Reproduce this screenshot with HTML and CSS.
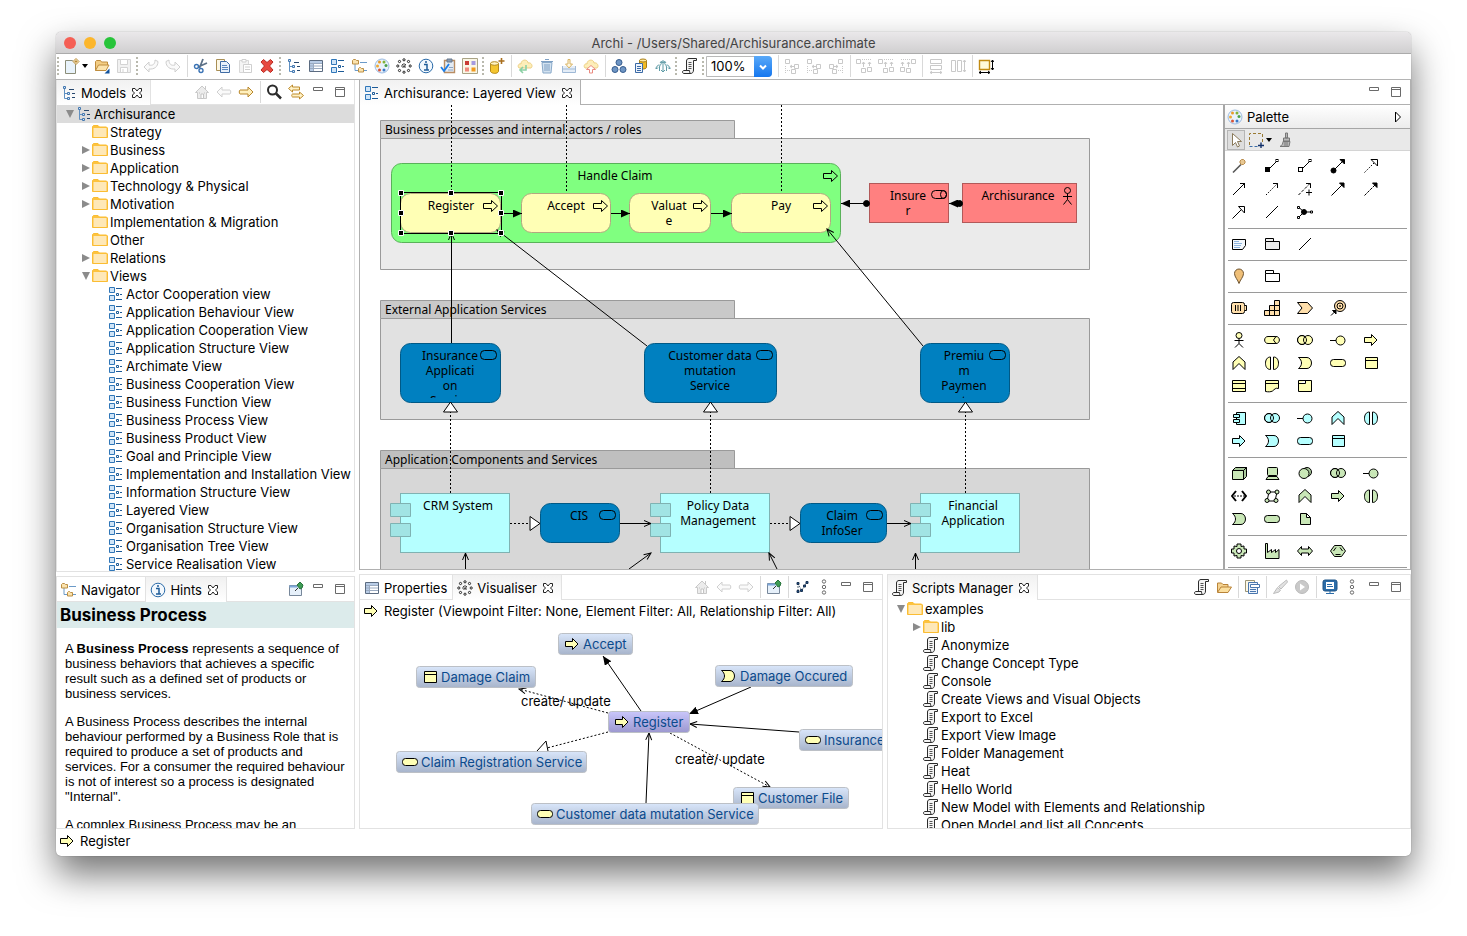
FILE: index.html
```html
<!DOCTYPE html>
<html lang="en">

<head>
    <meta charset="UTF-8">
    <meta name="viewport" content="width=device-width, initial-scale=1.0">
    <title>Archi - /Users/Shared/Archisurance.archimate</title>
    <link rel="stylesheet" href="styles.css">
</head>

<body>
    <!-- icon sprite -->
    <svg class="sprite" aria-hidden="true">
        <defs>
            <linearGradient id="box-blue" x1="0" y1="0" x2="0" y2="1">
                <stop offset="0" stop-color="#d9e6fa" />
                <stop offset="1" stop-color="#a7b4cb" />
            </linearGradient>
            <linearGradient id="box-purple" x1="0" y1="0" x2="0" y2="1">
                <stop offset="0" stop-color="#c9c6fb" />
                <stop offset="1" stop-color="#9c98cf" />
            </linearGradient>
            <marker id="m-fill" viewBox="0 0 9 8" refX="9" refY="4" markerWidth="9" markerHeight="8" orient="auto" markerUnits="userSpaceOnUse">
                <path d="M0 0L9 4L0 8z" fill="#000" stroke="none" />
            </marker>
            <marker id="m-open" viewBox="0 0 9 8" refX="8" refY="4" markerWidth="9" markerHeight="8" orient="auto" markerUnits="userSpaceOnUse">
                <path d="M1 1L8 4L1 7" fill="none" stroke="#000" />
            </marker>
            <marker id="m-tri" viewBox="0 0 12 16" refX="11" refY="8" markerWidth="12" markerHeight="16" orient="auto" markerUnits="userSpaceOnUse">
                <path d="M1 1L11 8L1 15z" fill="#fff" stroke="#000" />
            </marker>
        </defs>

        <!-- archimate elements -->
        <symbol id="i-process" viewBox="0 0 16 16"><path d="M1.5 5.5h7v-3L14 8l-5.500 5.500v-3h-7z" /></symbol>
        <symbol id="i-mark" viewBox="0 0 16 16"><path d="M.500 5.500h8v-3L14.500 8l-6 5.500v-3h-8z" /></symbol>
        <symbol id="i-function" viewBox="0 0 16 16"><path d="M2 14.500V7l6-5.500L14 7v7.500l-6-6z" /></symbol>
        <symbol id="i-interaction" viewBox="0 0 16 16"><path d="M6.500 2v12.500c-3.500 0-5-3-5-6.200S3 2 6.500 2zM9.500 2c3.500 0 5 3 5 6.200s-1.500 6.300-5 6.300z" /></symbol>
        <symbol id="i-event" viewBox="0 0 16 16"><path d="M1.500 2.500H10c2.500 0 4.500 2.500 4.500 5.500s-2 5.500-4.500 5.500H1.500c2-1.500 3-3.500 3-5.500s-1-4-3-5.500z" /></symbol>
        <symbol id="i-service" viewBox="0 0 16 16"><rect x=".5" y="4.500" width="15" height="7" rx="3" /></symbol>
        <symbol id="i-object" viewBox="0 0 16 16"><path d="M2.500 2.500h12v11h-12zM2.500 5.500h12" /></symbol>
        <symbol id="i-contract" viewBox="0 0 16 16"><path d="M1.500 2.500h13v11h-13zM1.500 5.500h13M1.500 10.500h13" /></symbol>
        <symbol id="i-representation" viewBox="0 0 16 16"><path d="M1.500 2.500h13v8c-3-1-4 1-6 2.500-2 1-4 1-7 .5zM1.500 5.500h13" /></symbol>
        <symbol id="i-product" viewBox="0 0 16 16"><path d="M1.500 2.500h13v11h-13zM1.500 5.500h7v-3" /></symbol>
        <symbol id="i-actor" viewBox="0 0 16 16"><circle cx="8" cy="3.500" r="3" /><path d="M8 6.500v5M3.500 8.500h9M8 11.500l-4 4M8 11.500l4 4" /></symbol>
        <symbol id="i-role" viewBox="0 0 16 16"><path d="M4 4.500h8c4.500 0 4.500 7 0 7H4c-4.500 0-4.500-7 0-7z" /><path d="M12 4.500L9.500 8l2.500 3.500" /></symbol>
        <symbol id="i-collab" viewBox="0 0 16 16"><circle cx="5" cy="8" r="4.500" /><circle cx="11" cy="8" r="4.500" /><circle cx="5" cy="8" r="4.500" fill="none" /></symbol>
        <symbol id="i-interface" viewBox="0 0 16 16"><path d="M0 8.500h6" /><circle cx="10.500" cy="8.500" r="4.500" /></symbol>
        <symbol id="i-component" viewBox="0 0 16 16"><path d="M5.500 2.500h9v12h-9z" /><path d="M2.500 4.500h6v3h-6zM2.500 9.500h6v3h-6z" /></symbol>
        <symbol id="i-node" viewBox="0 0 16 16"><path d="M1.500 5.500l3-3h11l-3 3z" fill="#a9c99c" /><path d="M12.500 5.500l3-3v9l-3 3z" fill="#a9c99c" /><path d="M1.500 5.500h11v9h-11z" /></symbol>
        <symbol id="i-device" viewBox="0 0 16 16"><rect x="3.500" y="2.500" width="10" height="8" rx="1" /><path d="M4 11.500h9l2 3H2z" /></symbol>
        <symbol id="i-software" viewBox="0 0 16 16"><circle cx="10" cy="7" r="4.500" fill="#a9c99c" /><circle cx="7" cy="8.500" r="5" /></symbol>
        <symbol id="i-path" viewBox="0 0 16 16"><path d="M5 3L1 8l4 5M11 3l4 5-4 5" stroke-width="2" fill="none" /><path d="M3 8h11" stroke-dasharray="2 1" /></symbol>
        <symbol id="i-network" viewBox="0 0 16 16"><path d="M5 4h8l-2 9H3z" fill="none" /><circle cx="4.500" cy="4" r="2" /><circle cx="13" cy="4" r="2" /><circle cx="3" cy="12.500" r="2" /><circle cx="12" cy="12.500" r="2" /></symbol>
        <symbol id="i-artifact" viewBox="0 0 16 16"><path d="M3.500 2.500h6l4 4v7h-10zM9.500 2.500v4h4" /></symbol>
        <symbol id="i-equipment" viewBox="0 0 16 16"><path d="M6 1h4v2.500l3-.5v3h2.500v4H13v3l-3-.5V15H6v-2.500L3 13v-3H.5V6H3V3l3 .5z" /><circle cx="8" cy="8" r="2.500" fill="#fff" /></symbol>
        <symbol id="i-facility" viewBox="0 0 16 16"><path d="M1.500.500h2v9l4-3v3l4-3v3l3.500-3v9H1.500z" /></symbol>
        <symbol id="i-distribution" viewBox="0 0 16 16"><path d="M4.500 3.500L.5 8l4 4.500V10h7v2.500l4-4.500-4-4.500V6h-7z" /></symbol>
        <symbol id="i-material" viewBox="0 0 16 16"><path d="M4.500 2.500h7L15.500 8l-4 5.500h-7L.5 8z" /><path d="M6 4.500L3.500 8M10 4.500L12.500 8M5.500 11.500h5" /></symbol>
        <symbol id="i-resource" viewBox="0 0 16 16"><rect x=".5" y="2.500" width="13" height="11" rx="2" /><path d="M13.500 5.500h2v5h-2M4.500 5v6M7 5v6M9.500 5v6" /></symbol>
        <symbol id="i-capability" viewBox="0 0 16 16"><path d="M.5 10.500h15v5H.5zM5.500 5.500h10v5h-10zM10.500.500h5v5h-5zM5.500 10.500v5M10.500 5.500v10" /></symbol>
        <symbol id="i-valuestream" viewBox="0 0 16 16"><path d="M.5 2.500h10L15.500 8l-5 5.500H.5L5 8z" /></symbol>
        <symbol id="i-course" viewBox="0 0 16 16"><circle cx="10" cy="6" r="5.500" /><circle cx="10" cy="6" r="3" /><circle cx="10" cy="6" r=".5" /><path d="M1 15.500l4-4M2.500 10.500h3.500v3.500z" fill="#000" /></symbol>
        <symbol id="i-location" viewBox="0 0 16 16"><path d="M8 15.500C7 12 3.500 9 3.500 5.500a4.500 4.500 0 0 1 9 0C12.500 9 9 12 8 15.500z" stroke="#6d5330" /></symbol>
        <symbol id="i-note" viewBox="0 0 16 16"><path d="M1.500 3.500h13v6l-3 4h-10z" fill="#f3f8fd" /><path d="M3 5.500h5M3 7.500h8M3 9.500h7M3 11.500h6" stroke="#8db4de" /></symbol>
        <symbol id="i-group" viewBox="0 0 16 16"><path d="M1.500 5.500h14v8h-14zM1.500 5.500v-3h8v3" /></symbol>

        <!-- relations -->
        <symbol id="r-magic" viewBox="0 0 16 16"><path d="M2 14.500L10 6.500" stroke="#555" stroke-width="1.600" /><path d="M9 3l1.500-1.500h2L14 3v2l-1.500 1.500h-2L9 5z" fill="#e8c893" stroke="#b98c4c" /></symbol>
        <symbol id="r-composition" viewBox="0 0 16 16"><path d="M4 12L13 3" /><rect x="1.500" y="9.500" width="4" height="4" fill="#000" /><rect x="12" y="1.500" width="2" height="2" fill="#fff" /></symbol>
        <symbol id="r-aggregation" viewBox="0 0 16 16"><path d="M4 12L13 3" /><rect x="1.500" y="9.500" width="4" height="4" fill="#fff" /><rect x="12" y="1.500" width="2" height="2" fill="#fff" /></symbol>
        <symbol id="r-assignment" viewBox="0 0 16 16"><path d="M3 13L13 3" /><circle cx="3.500" cy="12.500" r="2.500" fill="#000" /><path d="M10 1.500h4.500V6z" fill="#000" /></symbol>
        <symbol id="r-realization" viewBox="0 0 16 16"><path d="M1.500 14.500L11 5" stroke-dasharray="1.500 1.500" /><path d="M8 1.500h6.500V8z" fill="#fff" /></symbol>
        <symbol id="r-serving" viewBox="0 0 16 16"><path d="M2 14L14 2M9 2.500h4.500V7" fill="none" /></symbol>
        <symbol id="r-access" viewBox="0 0 16 16"><path d="M2 14L14 2" stroke-dasharray="1.500 1.500" /><path d="M9 2.500h4.500V7" fill="none" /></symbol>
        <symbol id="r-influence" viewBox="0 0 16 16"><path d="M1.500 14L14 1.500" stroke-dasharray="3 1.500" /><path d="M9 2.500h4.500V7M9 11.500h6M12 8.500v6" fill="none" /></symbol>
        <symbol id="r-trigger" viewBox="0 0 16 16"><path d="M1.500 14.500L12 4" /><path d="M9.500 2h4.500v4.500z" fill="#000" /></symbol>
        <symbol id="r-flow" viewBox="0 0 16 16"><path d="M1.500 14.500L12 4" stroke-dasharray="3 1" /><path d="M9.500 2h4.500v4.500z" fill="#000" /></symbol>
        <symbol id="r-special" viewBox="0 0 16 16"><path d="M1.500 14.500L11 5" /><path d="M7.500 2.500h6V9z" fill="#fff" /></symbol>
        <symbol id="r-line" viewBox="0 0 16 16"><path d="M2 14L14 2" /></symbol>
        <symbol id="r-junction" viewBox="0 0 16 16"><path d="M2 3.500l5 4.500-5 5M7 8h7" fill="none" /><circle cx="7" cy="8" r="2.500" fill="#000" /><path d="M.500 2.500h2v2h-2zM.500 12.500h2v2h-2zM13.500 7h2v2h-2z" fill="#fff" /></symbol>

        <!-- workbench -->
        <symbol id="w-min" viewBox="0 0 16 16"><path d="M3.500 3.500h9v3h-9z" fill="#fff" stroke="#6a6a6a" /></symbol>
        <symbol id="w-max" viewBox="0 0 16 16"><path d="M3.500 3.500h9v9h-9zM3.500 5.500h9" fill="#fff" stroke="#6a6a6a" /></symbol>
        <symbol id="w-close" viewBox="0 0 12 12"><path d="M1.500 1.500h2.500L6 4l2-2.500h2.500V4L8.500 6l2 2v2.500H8L6 8l-2 2.500H1.500V8l2-2-2-2z" fill="#fff" stroke="#222" /></symbol>
        <symbol id="w-model" viewBox="0 0 16 16"><path d="M3.500 4v9.500H7M3.500 8.500H7" fill="none" stroke="#5f8fc1" /><path d="M2.500 1.500h2v2h-2zM6.500 7.500h2v2h-2zM6.500 12.500h2v2h-2z" fill="#d8e8f7" stroke="#4478b0" /><path d="M8 4.500h5M11 8.500h3M11 12.500h3" stroke="#27486e" fill="none" /></symbol>
        <symbol id="w-view" viewBox="0 0 16 16"><path d="M1.500 1.500h5v5h-5zM1.500 9.500h5v5h-5z" fill="#cfe4f7" stroke="#2f76b8" /><path d="M8 2.500h6M8 13.500h6M12 8.500h2" stroke="#1c5a97" fill="none" /><path d="M8.500 7.500h2v2h-2z" fill="#fff" stroke="#1c5a97" /></symbol>
        <symbol id="w-nav" viewBox="0 0 16 16"><path d="M3 6v6.500h3M8 4.500h7M12 12.500h3" stroke="#6b9ac8" fill="none" /><path d="M.500 2.500l1-1h2l1 1h2v3.500h-6zM6.500 10.500l1-1h1l1 1h2v3.500h-5z" fill="#fbe3ae" stroke="#bb8f45" /></symbol>
        <symbol id="w-table" viewBox="0 0 16 16"><path d="M1.500 2.500h13v11h-13z" fill="#fff" stroke="#5b6b80" /><path d="M2 3h12v2.500H2zM2 3h3v10H2z" fill="#b8cce6" stroke="none" /><path d="M2 5.500h12M2 8h12M2 10.500h12M5.500 5v8" stroke="#9aaac0" fill="none" /></symbol>
        <symbol id="w-palette" viewBox="0 0 16 16"><circle cx="8" cy="8" r="7" fill="#e9f2fb" stroke="#9dbbe0" /><circle cx="5.500" cy="4" r="1.500" fill="#e79b28" stroke="none" /><circle cx="10" cy="4" r="1.500" fill="#7fb23a" stroke="none" /><circle cx="12" cy="7.500" r="1.500" fill="#4aa04a" stroke="none" /><circle cx="3.500" cy="8" r="1.500" fill="#f0a832" stroke="none" /><circle cx="5.500" cy="12" r="1.500" fill="#d75336" stroke="none" /><circle cx="10" cy="12" r="1.500" fill="#3a78c8" stroke="none" /></symbol>
        <symbol id="w-visual" viewBox="0 0 16 16"><path d="M8 5v6M5 8h6M6 6l4 4M10 6l-4 4" stroke="#444" stroke-dasharray="2 1" fill="none" /><g fill="#fff" stroke="#222"><circle cx="8" cy="1.800" r="1.100" /><circle cx="8" cy="14.200" r="1.100" /><circle cx="1.800" cy="8" r="1.100" /><circle cx="14.200" cy="8" r="1.100" /><circle cx="3.500" cy="3.500" r="1.100" /><circle cx="12.500" cy="3.500" r="1.100" /><circle cx="3.500" cy="12.500" r="1.100" /><circle cx="12.500" cy="12.500" r="1.100" /></g></symbol>
        <symbol id="w-info" viewBox="0 0 16 16"><circle cx="8" cy="8" r="6.800" fill="#f3f8fd" stroke="#2a6aa8" /><path d="M6 6.500h3v5M6 12h5" stroke="#1f5c99" stroke-width="1.500" fill="none" /><circle cx="8" cy="4" r="1" fill="#1f5c99" stroke="none" /></symbol>
        <symbol id="w-folder" viewBox="0 0 16 16"><path d="M.500 13.500v-11l1-1H6l1.500 1.500h7l1 1v9.500z" fill="#fdc33f" stroke="#fbbd33" /><path d="M1.500 4h13v9h-13z" fill="#fee8b8" stroke="none" /></symbol>
        <symbol id="w-script" viewBox="0 0 16 16"><path d="M4.500 12V3c0-1.500 1-2.500 2.500-2.500h7.500v2h-3v9.500c0 2-1 3.500-3 3.500H2c-2 0-2-3 0-3h5.500c0 2 .5 3 1.500 3" fill="#f4f4f4" stroke="#2c2c2c" /><path d="M6.500 4.500h3M6.500 6.500h3M6.500 8.500h3M6.500 10.500h3" stroke="#555" fill="none" /></symbol>
        <symbol id="w-new" viewBox="0 0 16 16"><path d="M1.500 2.500h7l3 3v10h-10z" fill="#e9f3fb" stroke="#8b8d78" /><path d="M12 .500L15 3.500L12 6.500L9 3.500z" fill="#fff6dc" stroke="#b98a35" /><path d="M12 2v3M10.500 3.500h3" stroke="#b98a35" fill="none" /></symbol>
        <symbol id="w-open" viewBox="0 0 16 16"><path d="M1.500 12.500v-9l1-1h4l1 1.500h6v3" fill="#f3cd84" stroke="#bf8d3e" /><path d="M1.500 12.500l3-5.500H15l-3 5.500z" fill="#fbe3ad" stroke="#bf8d3e" /><path d="M15.500 10.500v5h-5z" fill="#12529c" stroke="none" /></symbol>
        <symbol id="w-openfolder" viewBox="0 0 16 16"><path d="M1.500 13v-9h4l1.500 1.500h5V8" fill="#f5d391" stroke="#b98338" /><path d="M1.500 13.500l3.500-5.500h10.500L12 13.500z" fill="#fbdf9f" stroke="#b98338" /></symbol>
        <symbol id="w-save" viewBox="0 0 16 16"><path d="M1.500 1.500h13v13h-13z" fill="#f1f1f1" stroke="#d3d3d3" /><path d="M4.500 1.500h7v5h-7zM4.500 9.500h7v5h-7zM7 11v3" fill="#fff" stroke="#d3d3d3" /></symbol>
        <symbol id="w-undo" viewBox="0 0 16 16"><path d="M1 9l5-5v3c4 1 6-1 6-5l3 1.500C15 9 11 11.500 6 11v3z" fill="#fafafa" stroke="#cfcfcf" /></symbol>
        <symbol id="w-redo" viewBox="0 0 16 16"><path d="M15 9l-5-5v3C6 8 4 6 4 2L1 3.500C1 9 5 11.500 10 11v3z" fill="#fafafa" stroke="#cfcfcf" /></symbol>
        <symbol id="w-cut" viewBox="0 0 16 16"><path d="M10 1L6.500 10M14 5L5 9" stroke="#5d7187" stroke-width="1.800" /><circle cx="3.500" cy="8.500" r="2" fill="none" stroke="#3c74b5" stroke-width="1.400" /><circle cx="8" cy="12.500" r="2" fill="none" stroke="#3c74b5" stroke-width="1.400" /></symbol>
        <symbol id="w-copy" viewBox="0 0 16 16"><path d="M1.500 1.500h8v11h-8z" fill="#fdf8e6" stroke="#a98f55" /><path d="M5.500 3.500h6l3 3v8h-9z" fill="#e8f1fb" stroke="#3f6ba4" /><path d="M7 7.500h5M7 9.500h6M7 11.500h6" stroke="#5a86bd" fill="none" /></symbol>
        <symbol id="w-paste" viewBox="0 0 16 16"><path d="M2.500 2.500h9v12h-9z" fill="#f4f4f4" stroke="#d8d8d8" /><path d="M5 1.500h4v2.500H5zM6.500 6.500h8v8h-8zM8 9h5M8 11.500h5" fill="#fff" stroke="#cfcfcf" /></symbol>
        <symbol id="w-delete" viewBox="0 0 16 16"><path d="M2 4l2.500-2.500L8 4.500l3.500-3L14 4l-3.500 4 3.500 4-2.500 2.500-3.500-3-3.500 3L2 12l3.500-4z" fill="#e8493f" stroke="#b92c23" /></symbol>
        <symbol id="w-clip" viewBox="0 0 16 16"><path d="M4.500 2.500h10v12h-10z" fill="#e3ebf4" stroke="#b98d63" stroke-width="1.400" /><path d="M7 1h5v3H7z" fill="#8a9bb0" stroke="#66788e" /><path d="M1 9l3 4 5-7" stroke="#1c7ee8" stroke-width="1.800" fill="none" /><path d="M9 9.500h4M8 12h5" stroke="#8ea4c0" fill="none" /></symbol>
        <symbol id="w-swatch" viewBox="0 0 16 16"><path d="M.500.500h15v15H.500z" fill="#faf7e6" stroke="#a9a385" /><path d="M3 3h4v4H3z" fill="#c93b34" stroke="none" /><path d="M9.500 3h4v4h-4z" fill="#a59be0" stroke="none" /><path d="M3 9.500h4v4H3z" fill="#f08a7c" stroke="none" /><path d="M9.500 9.500h4v4h-4z" fill="#f29a1f" stroke="none" /></symbol>
        <symbol id="w-db" viewBox="0 0 16 16"><path d="M1.500 5.500v8c1.500 2.500 7 2.500 8 0v-8" fill="#f4c52f" stroke="#b48a1d" /><ellipse cx="5.500" cy="5.500" rx="4" ry="1.800" fill="#fff3c4" stroke="#b48a1d" /><path d="M12.500 0v6M9.500 3h6" stroke="#a86e1d" stroke-width="1.600" /></symbol>
        <symbol id="w-cloudin" viewBox="0 0 16 16"><path d="M2 10C0 8 2 5 4 6c0-5 7-5 7-1 4-1 5 4 3 5z" fill="#fdeeb9" stroke="#eccf83" /><path d="M9 7v5H4M6 9l-3 3 3 3" fill="none" stroke="#8bd0a4" stroke-width="1.600" /></symbol>
        <symbol id="w-cloudup" viewBox="0 0 16 16"><path d="M2 10C0 8 2 5 4 6c0-5 7-5 7-1 4-1 5 4 3 5z" fill="#fdeeb9" stroke="#eccf83" /><path d="M6.500 15v-3.500h-3L8 7.500l4.500 4h-3V15z" fill="#fff" stroke="#ea8a80" /></symbol>
        <symbol id="w-trash" viewBox="0 0 16 16"><path d="M3 4.500h10l-1 10.500H4z" fill="#d3e2f0" stroke="#89a9c9" /><path d="M2 3.500h12M6 1.500h4M6 6v7M8 6v7M10 6v7" stroke="#7ea0c4" fill="none" /></symbol>
        <symbol id="w-import" viewBox="0 0 16 16"><path d="M1.500 8v6.500h13V8M1.500 11h13" fill="#e4edf7" stroke="#9fb9d6" /><path d="M7 1.500h2V6h2.500L8 10 4.500 6H7z" fill="#fff7e0" stroke="#d9b567" /></symbol>
        <symbol id="w-circles" viewBox="0 0 16 16"><g fill="#6e95c4" stroke="#375d8e"><circle cx="8" cy="4.500" r="3" /><circle cx="4" cy="11.500" r="3" /><circle cx="12" cy="11.500" r="3" /></g></symbol>
        <symbol id="w-dbcopy" viewBox="0 0 16 16"><path d="M6.500 2.500v7c1 2 6 2 7 0v-7" fill="#f1bb28" stroke="#a77c12" /><ellipse cx="10" cy="2.500" rx="3.500" ry="1.500" fill="#ffe9a1" stroke="#a77c12" /><path d="M2.500 5.500h7v9h-7z" fill="#eef4fc" stroke="#3b6aa6" /><path d="M4 8.500h4M4 10.500h4M4 12.500h4" stroke="#3b6aa6" fill="none" /></symbol>
        <symbol id="w-merge" viewBox="0 0 16 16"><path d="M1.500 11c0-3 1-4 3-4M14.500 11c0-3-1-4-3-4M4.500 13V9c0-2 2-2 2-5M11.500 13V9c0-2-2-2-2-5M8 2v12M5 5l1.500-2L8 5l1.500-2L11 5M6 12l2 2 2-2M0 9.500L1.500 11 3 9.500M16 9.500L14.500 11 13 9.500" fill="none" stroke="#5f9ba6" /></symbol>
        <symbol id="w-align" viewBox="0 0 16 16"><path d="M1.500 1.500h4v4h-4zM10.500 6.500h4v4h-4z" fill="#fff" stroke="#c9c9c9" /><path d="M1.500 8v7M3 12.500h3" stroke="#c9c9c9" stroke-dasharray="1 1" /><path d="M6 8.500h4M8 7l-2 1.500L8 10M7.500 11.500h4v4h-4z" fill="none" stroke="#c9c9c9" /></symbol>
        <symbol id="w-alignv" viewBox="0 0 16 16"><path d="M.500 1.500h4v4h-4zM5.500 10.500h4v4h-4zM11.500 9.500h4v4h-4z" fill="#fff" stroke="#c9c9c9" /><path d="M6 1.500h10" stroke="#c9c9c9" stroke-dasharray="1 1" /><path d="M7.500 9V4M6 6l1.500-2L9 6M13.500 8V4M12 6l1.500-2L15 6" fill="none" stroke="#c9c9c9" /></symbol>
        <symbol id="w-matchw" viewBox="0 0 16 16"><path d="M2.500 1.500h11v4h-11zM2.500 7.500h11v4h-11zM2 14.500h12M4 13l-2 1.500L4 16M12 13l2 1.500L12 16" fill="none" stroke="#c9c9c9" /></symbol>
        <symbol id="w-matchh" viewBox="0 0 16 16"><path d="M1.500 2.500h4v11h-4zM7.500 2.500h4v11h-4zM14.500 2v12M13 4l1.500-2L16 4M13 12l1.500 2 1.500-2" fill="none" stroke="#c9c9c9" /></symbol>
        <symbol id="w-size" viewBox="0 0 16 16"><path d="M1.500 2.500h10v9h-10z" fill="#fff9d8" stroke="#c28b12" stroke-width="1.400" /><path d="M1 14.500h11M3 13l-2 1.500L3 16M10 13l2 1.500L10 16M14.500 2v10M13 4l1.500-2L16 4M13 10l1.500 2 1.500-2" fill="none" stroke="#000" /></symbol>
        <symbol id="w-home" viewBox="0 0 16 16"><path d="M1.500 8.500L8 2l6.500 6.500h-2v6h-9v-6zM11.500 5V2" fill="#ececec" stroke="#c9c9c9" /><path d="M7 10h2.500v4.500H7zM5 9h1M10 9h1" fill="#fff" stroke="#c4c4c4" /></symbol>
        <symbol id="w-left" viewBox="0 0 16 16"><path d="M1 8l5-5v3h8c1 0 1 4 0 4H6v3z" fill="#fafafa" stroke="#d0d0d0" /></symbol>
        <symbol id="w-right" viewBox="0 0 16 16"><path d="M15 8l-5-5v3H2c-1 0-1 4 0 4h8v3z" /></symbol>
        <symbol id="w-search" viewBox="0 0 16 16"><circle cx="6.500" cy="6" r="4.500" fill="none" stroke="#2b2b2b" stroke-width="2" /><path d="M10 9.500l5 5" stroke="#2b2b2b" stroke-width="2.500" /></symbol>
        <symbol id="w-link" viewBox="0 0 16 16"><path d="M.500 4.500L4.500 1v2h7v3h-7v2z" fill="#fff2c8" stroke="#bd8a2b" /><path d="M15.500 11.500l-4 3.500v-2h-7c-1 0-1-3 0-3h7V8z" fill="#fff2c8" stroke="#bd8a2b" /></symbol>
        <symbol id="w-pin" viewBox="0 0 16 16"><path d="M1.500 4.500h12v10h-12z" fill="#e6f0fa" stroke="#77879a" /><path d="M1.500 4.500h8v2h-8z" fill="#7fa8da" stroke="none" /><path d="M7 10l3-3" stroke="#333" /><path d="M9 4l3-3 3 3-1 3-2 1z" fill="#3e9b55" stroke="#27743b" /></symbol>
        <symbol id="w-graph" viewBox="0 0 16 16"><path d="M4 12V5l3 5M8 11l3-5 2-3" fill="none" stroke="#567" stroke-dasharray="2 1" /><path d="M3 3.500h2v2H3zM6.500 10.500h2v2h-2zM12 2.500h2v2h-2zM9.500 6h2v2h-2zM3 11.500h2v2H3z" fill="#1d4f8c" stroke="#1b3350" /></symbol>
        <symbol id="w-dots" viewBox="0 0 16 16"><g fill="#fff" stroke="#6b6b6b"><circle cx="8" cy="2.500" r="1.700" /><circle cx="8" cy="8" r="1.700" /><circle cx="8" cy="13.500" r="1.700" /></g></symbol>
        <symbol id="w-layers" viewBox="0 0 16 16"><path d="M1.500 1.500h9v11h-9z" fill="#fdf8e6" stroke="#9b9577" /><path d="M4.500 3.500h9v11h-9z" fill="#eef4fc" stroke="#4976ae" /><path d="M6 10.500h6M6 12.500h6M6.500 5.500h9v3h-9z" fill="#fff" stroke="#4976ae" /></symbol>
        <symbol id="w-brush" viewBox="0 0 16 16"><path d="M14.500 1L6.500 7.500l2.500 2.500L15.500 3zM5.500 8.500L1.500 14.500l5.500-1.500 1.500-2z" fill="#e2e2e2" stroke="#bdbdbd" /></symbol>
        <symbol id="w-run" viewBox="0 0 16 16"><circle cx="8" cy="8" r="6.500" fill="#c9c9c9" stroke="#bbb" /><path d="M6 4.500L11 8l-5 3.500z" fill="#fff" stroke="none" /></symbol>
        <symbol id="w-console" viewBox="0 0 16 16"><rect x="1" y="1" width="14" height="11" rx="2" fill="#2b6ca8" stroke="#1f5587" /><path d="M4 3h8v7H4z" fill="#fff" stroke="none" /><path d="M5 5.500h5M5 7.500h6M4 14.500h8M8 12v2" stroke="#2b6ca8" fill="none" /></symbol>
        <symbol id="w-cursor" viewBox="0 0 16 16"><path d="M4.500 1.500v12l3-3 2 4.500 2-1-2-4.500h4z" fill="#fff" stroke="#8a7a5a" /></symbol>
        <symbol id="w-marquee" viewBox="0 0 16 16"><path d="M1.500 13V1.500h13V10" fill="none" stroke="#9a7a32" stroke-dasharray="3 2" /><path d="M1.500 14.500H11" stroke="#3c6ea8" stroke-dasharray="3 2" /><path d="M10 13.500h6M13 10.500v6" stroke="#12306a" stroke-width="1.400" /></symbol>
        <symbol id="w-format" viewBox="0 0 16 16"><path d="M7.500 1h2v5h-2zM5.500 6h6v3h-6zM5 9.500h7l-1 5H2c2-1 3-3 3-5z" fill="#b9b9b9" stroke="#777" /><path d="M7 10v4M9 10v4" stroke="#777" /></symbol>
    </svg>

    <div class="window">
        <header class="titlebar">
            <div class="lights"><i class="light-red"></i><i class="light-amber"></i><i class="light-green"></i></div>
            <h1>Archi - /Users/Shared/Archisurance.archimate</h1>
        </header>

        <nav class="toolbar" aria-label="Main toolbar">
            <span class="grip"></span>
            <button class="tool wide" aria-label="New"><svg><use href="#w-new" /></svg><i class="caret"></i></button>
            <button class="tool" aria-label="Open"><svg><use href="#w-open" /></svg></button>
            <button class="tool" aria-label="Save" disabled><svg><use href="#w-save" /></svg></button>
            <span class="grip"></span>
            <button class="tool" aria-label="Undo" disabled><svg><use href="#w-undo" /></svg></button>
            <button class="tool" aria-label="Redo" disabled><svg><use href="#w-redo" /></svg></button>
            <span class="sep"></span>
            <button class="tool" aria-label="Cut"><svg><use href="#w-cut" /></svg></button>
            <button class="tool" aria-label="Copy"><svg><use href="#w-copy" /></svg></button>
            <button class="tool" aria-label="Paste" disabled><svg><use href="#w-paste" /></svg></button>
            <button class="tool" aria-label="Delete"><svg><use href="#w-delete" /></svg></button>
            <span class="grip"></span>
            <button class="tool" aria-label="Models"><svg><use href="#w-model" /></svg></button>
            <button class="tool" aria-label="Properties"><svg><use href="#w-table" /></svg></button>
            <button class="tool" aria-label="Outline"><svg><use href="#w-view" /></svg></button>
            <button class="tool" aria-label="Navigator"><svg><use href="#w-nav" /></svg></button>
            <button class="tool" aria-label="Palette"><svg><use href="#w-palette" /></svg></button>
            <button class="tool" aria-label="Visualiser"><svg><use href="#w-visual" /></svg></button>
            <button class="tool" aria-label="Hints"><svg><use href="#w-info" /></svg></button>
            <button class="tool" aria-label="Validator"><svg><use href="#w-clip" /></svg></button>
            <button class="tool" aria-label="Specializations"><svg><use href="#w-swatch" /></svg></button>
            <span class="grip"></span>
            <button class="tool" aria-label="New repository"><svg><use href="#w-db" /></svg></button>
            <span class="sep"></span>
            <button class="tool" aria-label="Refresh model"><svg><use href="#w-cloudin" /></svg></button>
            <button class="tool" aria-label="Discard changes"><svg><use href="#w-trash" /></svg></button>
            <button class="tool" aria-label="Commit changes"><svg><use href="#w-import" /></svg></button>
            <button class="tool" aria-label="Publish changes"><svg><use href="#w-cloudup" /></svg></button>
            <span class="sep"></span>
            <button class="tool" aria-label="Repositories"><svg><use href="#w-circles" /></svg></button>
            <button class="tool" aria-label="History"><svg><use href="#w-dbcopy" /></svg></button>
            <button class="tool" aria-label="Branches"><svg><use href="#w-merge" /></svg></button>
            <span class="grip"></span>
            <button class="tool" aria-label="Scripts"><svg><use href="#w-script" /></svg></button>
            <span class="grip"></span>
            <div class="zoom">
                <select aria-label="Zoom level">
                    <option>100%</option>
                    <option>200%</option>
                </select>
                <svg viewBox="0 0 18 20"><path d="M6 9l3 3 3-3" /></svg>
            </div>
            <span class="sep"></span>
            <button class="tool" aria-label="Align left" disabled><svg><use href="#w-align" /></svg></button>
            <button class="tool" aria-label="Align center" disabled><svg><use href="#w-align" /></svg></button>
            <button class="tool flip" aria-label="Align right" disabled><svg><use href="#w-align" /></svg></button>
            <span class="sep"></span>
            <button class="tool" aria-label="Align top" disabled><svg><use href="#w-alignv" /></svg></button>
            <button class="tool" aria-label="Align middle" disabled><svg><use href="#w-alignv" /></svg></button>
            <button class="tool flip" aria-label="Align bottom" disabled><svg><use href="#w-alignv" /></svg></button>
            <span class="sep"></span>
            <button class="tool" aria-label="Match width" disabled><svg><use href="#w-matchw" /></svg></button>
            <button class="tool" aria-label="Match height" disabled><svg><use href="#w-matchh" /></svg></button>
            <span class="sep"></span>
            <button class="tool" aria-label="Default size"><svg><use href="#w-size" /></svg></button>
        </nav>

        <main class="workbench">
            <div class="side">
                <!-- Models -->
                <section class="view grow">
                    <div class="tabs">
                        <div class="tab active"><svg class="icon"><use href="#w-model" /></svg><button>Models</button><svg class="close"><use href="#w-close" /></svg></div>
                        <div class="view-tools">
                            <button class="tool" aria-label="Home" disabled><svg><use href="#w-home" /></svg></button>
                            <button class="tool" aria-label="Back" disabled><svg><use href="#w-left" /></svg></button>
                            <button class="tool go" aria-label="Forward"><svg><use href="#w-right" /></svg></button>
                            <span class="sep"></span>
                            <button class="tool" aria-label="Search"><svg><use href="#w-search" /></svg></button>
                            <button class="tool" aria-label="Link with view"><svg><use href="#w-link" /></svg></button>
                            <button class="tool" aria-label="Minimize"><svg><use href="#w-min" /></svg></button>
                            <button class="tool" aria-label="Maximize"><svg><use href="#w-max" /></svg></button>
                        </div>
                    </div>
                    <ul class="tree">
                        <li class="selected"><i class="arrow open"></i><svg class="icon"><use href="#w-model" /></svg>Archisurance</li>
                        <li class="l1"><i class="arrow none"></i><svg class="icon"><use href="#w-folder" /></svg>Strategy</li>
                        <li class="l1"><i class="arrow"></i><svg class="icon"><use href="#w-folder" /></svg>Business</li>
                        <li class="l1"><i class="arrow"></i><svg class="icon"><use href="#w-folder" /></svg>Application</li>
                        <li class="l1"><i class="arrow"></i><svg class="icon"><use href="#w-folder" /></svg>Technology &amp; Physical</li>
                        <li class="l1"><i class="arrow"></i><svg class="icon"><use href="#w-folder" /></svg>Motivation</li>
                        <li class="l1"><i class="arrow none"></i><svg class="icon"><use href="#w-folder" /></svg>Implementation &amp; Migration</li>
                        <li class="l1"><i class="arrow none"></i><svg class="icon"><use href="#w-folder" /></svg>Other</li>
                        <li class="l1"><i class="arrow"></i><svg class="icon"><use href="#w-folder" /></svg>Relations</li>
                        <li class="l1"><i class="arrow open"></i><svg class="icon"><use href="#w-folder" /></svg>Views</li>
                        <li class="l2"><i class="arrow none"></i><svg class="icon"><use href="#w-view" /></svg>Actor Cooperation view</li>
                        <li class="l2"><i class="arrow none"></i><svg class="icon"><use href="#w-view" /></svg>Application Behaviour View</li>
                        <li class="l2"><i class="arrow none"></i><svg class="icon"><use href="#w-view" /></svg>Application Cooperation View</li>
                        <li class="l2"><i class="arrow none"></i><svg class="icon"><use href="#w-view" /></svg>Application Structure View</li>
                        <li class="l2"><i class="arrow none"></i><svg class="icon"><use href="#w-view" /></svg>Archimate View</li>
                        <li class="l2"><i class="arrow none"></i><svg class="icon"><use href="#w-view" /></svg>Business Cooperation View</li>
                        <li class="l2"><i class="arrow none"></i><svg class="icon"><use href="#w-view" /></svg>Business Function View</li>
                        <li class="l2"><i class="arrow none"></i><svg class="icon"><use href="#w-view" /></svg>Business Process View</li>
                        <li class="l2"><i class="arrow none"></i><svg class="icon"><use href="#w-view" /></svg>Business Product View</li>
                        <li class="l2"><i class="arrow none"></i><svg class="icon"><use href="#w-view" /></svg>Goal and Principle View</li>
                        <li class="l2"><i class="arrow none"></i><svg class="icon"><use href="#w-view" /></svg>Implementation and Installation View</li>
                        <li class="l2"><i class="arrow none"></i><svg class="icon"><use href="#w-view" /></svg>Information Structure View</li>
                        <li class="l2"><i class="arrow none"></i><svg class="icon"><use href="#w-view" /></svg>Layered View</li>
                        <li class="l2"><i class="arrow none"></i><svg class="icon"><use href="#w-view" /></svg>Organisation Structure View</li>
                        <li class="l2"><i class="arrow none"></i><svg class="icon"><use href="#w-view" /></svg>Organisation Tree View</li>
                        <li class="l2"><i class="arrow none"></i><svg class="icon"><use href="#w-view" /></svg>Service Realisation View</li>
                    </ul>
                </section>

                <!-- Hints -->
                <section class="view hints">
                    <div class="tabs">
                        <div class="tab"><svg class="icon"><use href="#w-nav" /></svg><button>Navigator</button></div>
                        <div class="tab active"><svg class="icon"><use href="#w-info" /></svg><button>Hints</button><svg class="close"><use href="#w-close" /></svg></div>
                        <div class="view-tools">
                            <button class="tool" aria-label="Pin"><svg><use href="#w-pin" /></svg></button>
                            <button class="tool" aria-label="Minimize"><svg><use href="#w-min" /></svg></button>
                            <button class="tool" aria-label="Maximize"><svg><use href="#w-max" /></svg></button>
                        </div>
                    </div>
                    <h2>Business Process</h2>
                    <div class="hint-text">
                        <p>A <b>Business Process</b> represents a sequence of business behaviors that achieves a specific result such as a defined set of products or business services.</p>
                        <p>A Business Process describes the internal behaviour performed by a Business Role that is required to produce a set of products and services. For a consumer the required behaviour is not of interest so a process is designated "Internal".</p>
                        <p>A complex Business Process may be an</p>
                    </div>
                </section>
            </div>

            <div class="center">
                <!-- Editor -->
                <section class="view editor grow">
                    <div class="tabs">
                        <div class="tab active"><svg class="icon"><use href="#w-view" /></svg><button>Archisurance: Layered View</button><svg class="close"><use href="#w-close" /></svg></div>
                        <div class="view-tools">
                            <button class="tool" aria-label="Minimize"><svg><use href="#w-min" /></svg></button>
                            <button class="tool" aria-label="Maximize"><svg><use href="#w-max" /></svg></button>
                        </div>
                    </div>
                    <div class="editor-body">
                        <div class="canvas">
                            <svg class="diagram" width="864" height="464" viewBox="360 105 864 464">
                                <defs>
                                    <clipPath id="label-clip"><rect x="400" y="344" width="620" height="54" /></clipPath>
                                </defs>

                                <!-- groups -->
                                <g class="group">
                                    <path d="M380.500 120.500h354v18h-354z" fill="#d2d2d2" />
                                    <path d="M380.500 138.500h709v131h-709z" fill="#ebebeb" />
                                    <path d="M380.500 300.500h354v18h-354z" fill="#c9c9c9" />
                                    <path d="M380.500 318.500h709v101h-709z" fill="#e1e1e1" />
                                    <path d="M380.500 450.500h354v18h-354z" fill="#bfbfbf" />
                                    <path d="M380.500 468.500h709v131h-709z" fill="#d7d7d7" />
                                </g>
                                <text x="385" y="134">Business processes and internal actors / roles</text>
                                <text x="385" y="314">External Application Services</text>
                                <text x="385" y="464">Application Components and Services</text>

                                <!-- business layer -->
                                <rect class="claim" x="391.500" y="163.500" width="449" height="79" rx="10" />
                                <g class="business">
                                    <rect x="400.500" y="193.500" width="100" height="39" rx="10" />
                                    <rect x="521.500" y="193.500" width="89" height="39" rx="10" />
                                    <rect x="629.500" y="193.500" width="81" height="39" rx="10" />
                                    <rect x="731.500" y="193.500" width="99" height="39" rx="10" />
                                </g>
                                <g class="party">
                                    <rect x="869.500" y="183.500" width="79" height="39" />
                                    <rect x="962.500" y="183.500" width="114" height="39" />
                                </g>

                                <!-- application services -->
                                <g class="service">
                                    <rect x="400.500" y="343.500" width="100" height="59" rx="10" />
                                    <rect x="644.500" y="343.500" width="132" height="59" rx="10" />
                                    <rect x="920.500" y="343.500" width="89" height="59" rx="10" />
                                    <rect x="540.500" y="503.500" width="79" height="39" rx="10" />
                                    <rect x="800.500" y="503.500" width="86" height="39" rx="10" />
                                </g>

                                <!-- application components -->
                                <g class="component">
                                    <rect x="400.500" y="493.500" width="109" height="59" />
                                    <rect x="660.500" y="493.500" width="109" height="59" />
                                    <rect x="920.500" y="493.500" width="99" height="59" />
                                    <path class="lug" d="M390.500 503.500h20v13h-20zM390.500 523.500h20v13h-20zM650.500 503.500h20v13h-20zM650.500 523.500h20v13h-20zM910.500 503.500h20v13h-20zM910.500 523.500h20v13h-20z" />
                                </g>

                                <!-- element marks -->
                                <g class="mark">
                                    <use href="#i-mark" x="483" y="198" width="16" height="16" />
                                    <use href="#i-mark" x="593" y="198" width="16" height="16" />
                                    <use href="#i-mark" x="693" y="198" width="16" height="16" />
                                    <use href="#i-mark" x="813" y="198" width="16" height="16" />
                                    <use href="#i-mark" x="823" y="168" width="16" height="16" />
                                    <rect x="931.500" y="190.500" width="15" height="8" rx="4" /><ellipse cx="943.500" cy="194.500" rx="3" ry="4" />
                                    <path d="M1067.500 193.500v6M1063 196.500h9M1067.500 199.500l-4 5M1067.500 199.500l4 5" /><circle cx="1067.500" cy="190.500" r="3" />
                                    <rect x="480.500" y="350.500" width="16" height="9" rx="4" />
                                    <rect x="756.500" y="350.500" width="16" height="9" rx="4" />
                                    <rect x="989.500" y="350.500" width="16" height="9" rx="4" />
                                    <rect x="599.500" y="510.500" width="16" height="9" rx="4" />
                                    <rect x="866.500" y="510.500" width="16" height="9" rx="4" />
                                </g>

                                <!-- labels -->
                                <g class="label">
                                    <text x="615" y="180">Handle Claim</text>
                                    <text x="451" y="210">Register</text>
                                    <text x="566" y="210">Accept</text>
                                    <text x="669" y="210">Valuat<tspan x="669" dy="15">e</tspan></text>
                                    <text x="781" y="210">Pay</text>
                                    <text x="908" y="200">Insure<tspan x="908" dy="15">r</tspan></text>
                                    <text x="1018" y="200">Archisurance</text>
                                    <g clip-path="url(#label-clip)">
                                        <text x="450" y="360">Insurance<tspan x="450" dy="15">Applicati</tspan><tspan x="450" dy="15">on</tspan><tspan x="450" dy="15">Service</tspan></text>
                                        <text x="710" y="360">Customer data<tspan x="710" dy="15">mutation</tspan><tspan x="710" dy="15">Service</tspan></text>
                                        <text x="964" y="360">Premiu<tspan x="964" dy="15">m</tspan><tspan x="964" dy="15">Paymen</tspan><tspan x="964" dy="15">t</tspan></text>
                                    </g>
                                    <text x="458" y="510">CRM System</text>
                                    <text x="579" y="520">CIS</text>
                                    <text x="718" y="510">Policy Data<tspan x="718" dy="15">Management</tspan></text>
                                    <text x="842" y="520">Claim<tspan x="842" dy="15">InfoSer</tspan></text>
                                    <text x="973" y="510">Financial<tspan x="973" dy="15">Application</tspan></text>
                                </g>

                                <!-- connections -->
                                <g class="edge">
                                    <path class="dash" d="M451.500 105v87M566.500 105v88M781.500 105v88" />
                                    <path d="M502 213.500h20" marker-end="url(#m-fill)" />
                                    <path d="M611 213.500h19" marker-end="url(#m-fill)" />
                                    <path d="M711 213.500h21" marker-end="url(#m-fill)" />
                                    <path d="M866 203.500h-25" marker-end="url(#m-fill)" />
                                    <path d="M959 203.500h-10" marker-end="url(#m-fill)" />
                                    <circle cx="866.500" cy="203.500" r="3" /><circle cx="959.500" cy="203.500" r="3" />
                                    <path d="M451.500 343v-110" marker-end="url(#m-open)" />
                                    <path d="M647 346L497 230" marker-end="url(#m-open)" />
                                    <path d="M923 346L827 229" marker-end="url(#m-open)" />
                                    <path class="dash" d="M450.500 493v-91" marker-end="url(#m-tri)" />
                                    <path class="dash" d="M710.500 493v-91" marker-end="url(#m-tri)" />
                                    <path class="dash" d="M965.500 493v-91" marker-end="url(#m-tri)" />
                                    <path class="dash" d="M510 523.500h30" marker-end="url(#m-tri)" />
                                    <path class="dash" d="M770 523.500h30" marker-end="url(#m-tri)" />
                                    <path d="M620 523.500h31" marker-end="url(#m-open)" />
                                    <path d="M887 523.500h24" marker-end="url(#m-open)" />
                                    <path d="M465.500 569v-16" marker-end="url(#m-open)" />
                                    <path d="M915.500 569v-16" marker-end="url(#m-open)" />
                                    <path d="M629 569L651 553" marker-end="url(#m-open)" />
                                    <path d="M777 569L769 553" marker-end="url(#m-open)" />
                                </g>

                                <!-- selection -->
                                <rect class="outline" x="400.500" y="192.500" width="101" height="41" />
                                <path class="handles" d="M398.500 190.500h5v5h-5zM448.500 190.500h5v5h-5zM498.500 190.500h5v5h-5zM398.500 210.500h5v5h-5zM498.500 210.500h5v5h-5zM398.500 230.500h5v5h-5zM448.500 230.500h5v5h-5zM498.500 230.500h5v5h-5z" />
                            </svg>
                        </div>

                        <!-- Palette -->
                        <aside class="palette">
                            <div class="palette-head"><svg class="icon"><use href="#w-palette" /></svg>Palette<button aria-label="Collapse palette"><svg viewBox="0 0 8 12"><path d="M1.500 1v10l5-5z" /></svg></button></div>
                            <div class="palette-tools">
                                <button class="tool on" aria-label="Select"><svg><use href="#w-cursor" /></svg></button>
                                <button class="tool wide" aria-label="Marquee"><svg><use href="#w-marquee" /></svg><i class="caret"></i></button>
                                <button class="tool" aria-label="Format painter"><svg><use href="#w-format" /></svg></button>
                            </div>
                            <div class="items">
                                <button aria-label="Magic connector"><svg><use href="#r-magic" /></svg></button>
                                <button aria-label="Composition"><svg><use href="#r-composition" /></svg></button>
                                <button aria-label="Aggregation"><svg><use href="#r-aggregation" /></svg></button>
                                <button aria-label="Assignment"><svg><use href="#r-assignment" /></svg></button>
                                <button aria-label="Realization"><svg><use href="#r-realization" /></svg></button>
                                <button aria-label="Serving"><svg><use href="#r-serving" /></svg></button>
                                <button aria-label="Access"><svg><use href="#r-access" /></svg></button>
                                <button aria-label="Influence"><svg><use href="#r-influence" /></svg></button>
                                <button aria-label="Triggering"><svg><use href="#r-trigger" /></svg></button>
                                <button aria-label="Flow"><svg><use href="#r-flow" /></svg></button>
                                <button aria-label="Specialization"><svg><use href="#r-special" /></svg></button>
                                <button aria-label="Association"><svg><use href="#r-line" /></svg></button>
                                <button aria-label="Junction"><svg><use href="#r-junction" /></svg></button>
                            </div>
                            <div class="items grey">
                                <button aria-label="Note"><svg><use href="#i-note" /></svg></button>
                                <button aria-label="Visual group"><svg><use href="#i-group" /></svg></button>
                                <button aria-label="Connection"><svg><use href="#r-line" /></svg></button>
                            </div>
                            <div class="items">
                                <button class="tan" aria-label="Location"><svg><use href="#i-location" /></svg></button>
                                <button aria-label="Grouping"><svg><use href="#i-group" /></svg></button>
                            </div>
                            <div class="items orange">
                                <button aria-label="Resource"><svg><use href="#i-resource" /></svg></button>
                                <button aria-label="Capability"><svg><use href="#i-capability" /></svg></button>
                                <button aria-label="Value stream"><svg><use href="#i-valuestream" /></svg></button>
                                <button aria-label="Course of action"><svg><use href="#i-course" /></svg></button>
                            </div>
                            <div class="items yellow">
                                <button aria-label="Business actor"><svg><use href="#i-actor" /></svg></button>
                                <button aria-label="Business role"><svg><use href="#i-role" /></svg></button>
                                <button aria-label="Business collaboration"><svg><use href="#i-collab" /></svg></button>
                                <button aria-label="Business interface"><svg><use href="#i-interface" /></svg></button>
                                <button aria-label="Business process"><svg><use href="#i-process" /></svg></button>
                                <button aria-label="Business function"><svg><use href="#i-function" /></svg></button>
                                <button aria-label="Business interaction"><svg><use href="#i-interaction" /></svg></button>
                                <button aria-label="Business event"><svg><use href="#i-event" /></svg></button>
                                <button aria-label="Business service"><svg><use href="#i-service" /></svg></button>
                                <button aria-label="Business object"><svg><use href="#i-object" /></svg></button>
                                <button aria-label="Contract"><svg><use href="#i-contract" /></svg></button>
                                <button aria-label="Representation"><svg><use href="#i-representation" /></svg></button>
                                <button aria-label="Product"><svg><use href="#i-product" /></svg></button>
                            </div>
                            <div class="items cyan">
                                <button aria-label="Application component"><svg><use href="#i-component" /></svg></button>
                                <button aria-label="Application collaboration"><svg><use href="#i-collab" /></svg></button>
                                <button aria-label="Application interface"><svg><use href="#i-interface" /></svg></button>
                                <button aria-label="Application function"><svg><use href="#i-function" /></svg></button>
                                <button aria-label="Application interaction"><svg><use href="#i-interaction" /></svg></button>
                                <button aria-label="Application process"><svg><use href="#i-process" /></svg></button>
                                <button aria-label="Application event"><svg><use href="#i-event" /></svg></button>
                                <button aria-label="Application service"><svg><use href="#i-service" /></svg></button>
                                <button aria-label="Data object"><svg><use href="#i-object" /></svg></button>
                            </div>
                            <div class="items green">
                                <button aria-label="Node"><svg><use href="#i-node" /></svg></button>
                                <button aria-label="Device"><svg><use href="#i-device" /></svg></button>
                                <button aria-label="System software"><svg><use href="#i-software" /></svg></button>
                                <button aria-label="Technology collaboration"><svg><use href="#i-collab" /></svg></button>
                                <button aria-label="Technology interface"><svg><use href="#i-interface" /></svg></button>
                                <button aria-label="Path"><svg><use href="#i-path" /></svg></button>
                                <button aria-label="Communication network"><svg><use href="#i-network" /></svg></button>
                                <button aria-label="Technology function"><svg><use href="#i-function" /></svg></button>
                                <button aria-label="Technology process"><svg><use href="#i-process" /></svg></button>
                                <button aria-label="Technology interaction"><svg><use href="#i-interaction" /></svg></button>
                                <button aria-label="Technology event"><svg><use href="#i-event" /></svg></button>
                                <button aria-label="Technology service"><svg><use href="#i-service" /></svg></button>
                                <button aria-label="Artifact"><svg><use href="#i-artifact" /></svg></button>
                            </div>
                            <div class="items green">
                                <button aria-label="Equipment"><svg><use href="#i-equipment" /></svg></button>
                                <button aria-label="Facility"><svg><use href="#i-facility" /></svg></button>
                                <button aria-label="Distribution network"><svg><use href="#i-distribution" /></svg></button>
                                <button aria-label="Material"><svg><use href="#i-material" /></svg></button>
                            </div>
                        </aside>
                    </div>
                </section>

                <div class="bottom">
                    <!-- Visualiser -->
                    <section class="view">
                        <div class="tabs">
                            <div class="tab"><svg class="icon"><use href="#w-table" /></svg><button>Properties</button></div>
                            <div class="tab active"><svg class="icon"><use href="#w-visual" /></svg><button>Visualiser</button><svg class="close"><use href="#w-close" /></svg></div>
                            <div class="view-tools">
                                <button class="tool" aria-label="Home" disabled><svg><use href="#w-home" /></svg></button>
                                <button class="tool" aria-label="Back" disabled><svg><use href="#w-left" /></svg></button>
                                <button class="tool" aria-label="Forward" disabled><svg><use href="#w-right" /></svg></button>
                                <span class="sep"></span>
                                <button class="tool" aria-label="Pin"><svg><use href="#w-pin" /></svg></button>
                                <span class="sep"></span>
                                <button class="tool" aria-label="Layout"><svg><use href="#w-graph" /></svg></button>
                                <button class="tool" aria-label="View menu"><svg><use href="#w-dots" /></svg></button>
                                <button class="tool" aria-label="Minimize"><svg><use href="#w-min" /></svg></button>
                                <button class="tool" aria-label="Maximize"><svg><use href="#w-max" /></svg></button>
                            </div>
                        </div>
                        <p class="focus"><svg class="icon elem"><use href="#i-process" /></svg>Register (Viewpoint Filter: None, Element Filter: All, Relationship Filter: All)</p>
                        <div class="canvas">
                            <svg class="graph" width="640" height="207" viewBox="360 622 640 207">
                                <g class="edge">
                                    <path d="M641 711L603 656" marker-end="url(#m-fill)" />
                                    <path d="M751 687L689 714" marker-end="url(#m-fill)" />
                                    <path d="M799 732L690 724" marker-end="url(#m-open)" />
                                    <path d="M646 803L649 733" marker-end="url(#m-open)" />
                                    <path class="dash" d="M608 713L519 689" marker-end="url(#m-open)" />
                                    <path class="dash" d="M670 733L770 787" marker-end="url(#m-open)" />
                                    <path class="dash" d="M608 732L547 748" />
                                    <path d="M537 751L546 741L548 751" fill="none" />
                                </g>
                                <text x="521" y="706">create/ update</text>
                                <text x="675" y="764">create/ update</text>
                                <g class="node">
                                    <rect x="558.500" y="633.500" width="74" height="21" rx="3" /><use href="#i-process" x="564" y="636" width="16" height="16" /><text x="583" y="649">Accept</text>
                                    <rect x="416.500" y="666.500" width="119" height="21" rx="3" /><use href="#i-object" x="422" y="669" width="16" height="16" /><text x="441" y="682">Damage Claim</text>
                                    <rect x="715.500" y="665.500" width="137" height="21" rx="3" /><use href="#i-event" x="720" y="668" width="16" height="16" /><text x="740" y="681">Damage Occured</text>
                                    <rect x="799.500" y="729.500" width="200" height="21" rx="3" /><use href="#i-service" x="805" y="732" width="16" height="16" /><text x="824" y="745">Insurance</text>
                                    <rect x="396.500" y="751.500" width="190" height="21" rx="3" /><use href="#i-service" x="402" y="754" width="16" height="16" /><text x="421" y="767">Claim Registration Service</text>
                                    <rect x="733.500" y="787.500" width="115" height="21" rx="3" /><use href="#i-object" x="739" y="790" width="16" height="16" /><text x="758" y="803">Customer File</text>
                                    <rect x="531.500" y="803.500" width="227" height="21" rx="3" /><use href="#i-service" x="537" y="806" width="16" height="16" /><text x="556" y="819">Customer data mutation Service</text>
                                    <rect class="root" x="608.500" y="711.500" width="81" height="21" rx="3" /><use href="#i-process" x="614" y="714" width="16" height="16" /><text x="633" y="727">Register</text>
                                </g>
                            </svg>
                        </div>
                    </section>

                    <!-- Scripts -->
                    <section class="view">
                        <div class="tabs">
                            <div class="tab active"><svg class="icon"><use href="#w-script" /></svg><button>Scripts Manager</button><svg class="close"><use href="#w-close" /></svg></div>
                            <div class="view-tools">
                                <button class="tool" aria-label="New script"><svg><use href="#w-script" /></svg></button>
                                <button class="tool" aria-label="Open folder"><svg><use href="#w-openfolder" /></svg></button>
                                <span class="sep"></span>
                                <button class="tool" aria-label="Restore examples"><svg><use href="#w-layers" /></svg></button>
                                <span class="sep"></span>
                                <button class="tool" aria-label="Edit" disabled><svg><use href="#w-brush" /></svg></button>
                                <button class="tool" aria-label="Run" disabled><svg><use href="#w-run" /></svg></button>
                                <span class="sep"></span>
                                <button class="tool" aria-label="Console"><svg><use href="#w-console" /></svg></button>
                                <button class="tool" aria-label="View menu"><svg><use href="#w-dots" /></svg></button>
                                <button class="tool" aria-label="Minimize"><svg><use href="#w-min" /></svg></button>
                                <button class="tool" aria-label="Maximize"><svg><use href="#w-max" /></svg></button>
                            </div>
                        </div>
                        <ul class="tree">
                            <li><i class="arrow open"></i><svg class="icon"><use href="#w-folder" /></svg>examples</li>
                            <li class="l1"><i class="arrow"></i><svg class="icon"><use href="#w-folder" /></svg>lib</li>
                            <li class="l1"><i class="arrow none"></i><svg class="icon"><use href="#w-script" /></svg>Anonymize</li>
                            <li class="l1"><i class="arrow none"></i><svg class="icon"><use href="#w-script" /></svg>Change Concept Type</li>
                            <li class="l1"><i class="arrow none"></i><svg class="icon"><use href="#w-script" /></svg>Console</li>
                            <li class="l1"><i class="arrow none"></i><svg class="icon"><use href="#w-script" /></svg>Create Views and Visual Objects</li>
                            <li class="l1"><i class="arrow none"></i><svg class="icon"><use href="#w-script" /></svg>Export to Excel</li>
                            <li class="l1"><i class="arrow none"></i><svg class="icon"><use href="#w-script" /></svg>Export View Image</li>
                            <li class="l1"><i class="arrow none"></i><svg class="icon"><use href="#w-script" /></svg>Folder Management</li>
                            <li class="l1"><i class="arrow none"></i><svg class="icon"><use href="#w-script" /></svg>Heat</li>
                            <li class="l1"><i class="arrow none"></i><svg class="icon"><use href="#w-script" /></svg>Hello World</li>
                            <li class="l1"><i class="arrow none"></i><svg class="icon"><use href="#w-script" /></svg>New Model with Elements and Relationship</li>
                            <li class="l1"><i class="arrow none"></i><svg class="icon"><use href="#w-script" /></svg>Open Model and list all Concepts</li>
                        </ul>
                    </section>
                </div>
            </div>
        </main>

        <footer class="status"><svg class="icon elem"><use href="#i-process" /></svg>Register</footer>
    </div>
</body>

</html>
```
FILE: styles.css
```css
* {
    box-sizing: border-box;
}

body {
    margin: 0;
    padding: 32px 56px 80px;
    height: 100vh;
    display: flex;
    background: #fff;
    color: #000;
    font: 13px/18px Inter, "Liberation Sans", sans-serif;
    overflow: hidden;
}

button {
    padding: 0;
    border: 0;
    background: none;
    color: inherit;
    font: inherit;
}

ul,
p,
h1,
h2 {
    margin: 0;
    padding: 0;
}

.sprite {
    position: absolute;
    width: 0;
    height: 0;
}

.window {
    flex: 1;
    min-width: 0;
    display: flex;
    flex-direction: column;
    background: #fff;
    border-radius: 5px;
    overflow: hidden;
    box-shadow: 0 0 1px rgba(0, 0, 0, 0.5), 0 18px 36px rgba(0, 0, 0, 0.55);
}

/* title bar */
.titlebar {
    flex: none;
    height: 22px;
    display: grid;
    grid-template-columns: 80px 1fr 80px;
    align-items: center;
    background: linear-gradient(#eae8ea, #d0cfd0);
    border-bottom: 1px solid #ababab;
}

.titlebar h1 {
    font-size: 13px;
    font-weight: 400;
    text-align: center;
    color: #444;
}

.lights {
    display: flex;
    gap: 8px;
    padding-left: 8px;
}

.lights i {
    width: 12px;
    height: 12px;
    border-radius: 50%;
}

.light-red {
    background: #f55f55;
}

.light-amber {
    background: #fcb62c;
}

.light-green {
    background: #27c43a;
}

/* toolbar */
.toolbar {
    flex: none;
    height: 26px;
    display: flex;
    align-items: center;
    padding-bottom: 1px;
    border-bottom: 1px solid #b4b4b4;
}

.tool {
    flex: none;
    width: 22px;
    height: 22px;
    display: flex;
    align-items: center;
    justify-content: center;
}

.tool svg,
.icon {
    flex: none;
    width: 16px;
    height: 16px;
    fill: #fafafa;
    stroke: #d0d0d0;
}

.tool.wide {
    width: 30px;
    gap: 2px;
}

.tool.go svg {
    fill: #fff0bd;
    stroke: #b8862a;
}

.tool.flip svg {
    transform: scaleX(-1);
}

.caret {
    border: 3px solid transparent;
    border-top: 4px solid #000;
    border-bottom: 0;
}

.grip {
    flex: none;
    width: 5px;
    height: 18px;
    background: repeating-linear-gradient(#b9b9ae 0 2px, #fff 2px 4px) 1px 0 / 2px 100% no-repeat;
}

.sep {
    flex: none;
    width: 6px;
    height: 22px;
    background: linear-gradient(#d9d9d9, #d9d9d9) 3px 0 / 1px 100% no-repeat;
}

.zoom {
    flex: none;
    display: grid;
    width: 66px;
    height: 21px;
    margin-right: 3px;
}

.zoom select,
.zoom svg {
    grid-area: 1 / 1;
}

.zoom select {
    appearance: none;
    width: 66px;
    padding: 0 4px;
    border: 1px solid #b9b9b9;
    border-radius: 0 4px 4px 0;
    background: #fff;
    color: #000;
    font: inherit;
}

.zoom svg {
    justify-self: end;
    width: 18px;
    height: 21px;
    border-radius: 0 4px 4px 0;
    background: linear-gradient(#5aa9f8, #1577ef);
    fill: none;
    stroke: #fff;
    stroke-width: 2;
    pointer-events: none;
}

/* workbench */
.workbench {
    flex: 1;
    min-height: 0;
    display: grid;
    grid-template-columns: 299px 1fr;
    gap: 4px;
}

.side,
.center {
    min-width: 0;
    min-height: 0;
    display: flex;
    flex-direction: column;
    gap: 4px;
}

.bottom {
    flex: none;
    height: 255px;
    display: grid;
    grid-template-columns: 1fr 1fr;
    gap: 4px;
}

.hints {
    flex: none;
    height: 253px;
}

.view {
    min-width: 0;
    min-height: 0;
    display: flex;
    flex-direction: column;
    border: 1px solid #e2e2e2;
    overflow: hidden;
}

.grow {
    flex: 1;
    border-top: 0;
}

.tabs {
    flex: none;
    height: 25px;
    display: flex;
    border-bottom: 1px solid #e2e2e2;
}

.tab {
    display: flex;
    align-items: center;
    gap: 4px;
    padding: 2px 5px 0 4px;
}

.tab.active {
    margin-bottom: -1px;
    padding-top: 1px;
    padding-right: 7px;
    border-right: 1px solid #e2e2e2;
    background: linear-gradient(#f1f1f1, #fff);
}

.tab + .tab.active {
    border-left: 1px solid #e2e2e2;
}

.close {
    width: 12px;
    height: 12px;
    margin-left: 1px;
}

.view-tools {
    display: flex;
    align-items: center;
    margin-left: auto;
    padding-right: 3px;
}

/* trees */
.tree {
    flex: 1;
    min-height: 0;
    list-style-type: none;
    overflow: hidden;
}

.tree li {
    height: 18px;
    display: flex;
    align-items: center;
    padding-left: 7px;
    white-space: nowrap;
}

.tree .l1 {
    padding-left: 23px;
}

.tree .l2 {
    padding-left: 39px;
}

.tree .icon {
    margin-right: 2px;
}

.tree .selected {
    background: #dcdcdc;
}

.arrow {
    width: 8px;
    height: 8px;
    margin: 0 2px;
    background: #8b8b8b;
    clip-path: polygon(0 0, 100% 50%, 0 100%);
}

.arrow.open {
    clip-path: polygon(0 0, 100% 0, 50% 100%);
}

.arrow.none {
    background: none;
}

/* hints */
.hints h2 {
    flex: none;
    padding: 0 3px;
    background: #dcebeb;
    font-size: 17px;
    line-height: 26px;
}

.hint-text {
    padding: 13px 8px 0;
    font: 13px/15px "Liberation Sans", sans-serif;
}

.hint-text p {
    margin-bottom: 13px;
}

/* editor */
.editor,
.editor .tabs,
.editor .tab.active {
    border-color: #b0b0b0;
}

.editor-body {
    flex: 1;
    min-height: 0;
    display: flex;
}

.canvas {
    flex: 1;
    min-width: 0;
    min-height: 0;
    overflow: hidden;
}

.canvas svg {
    display: block;
}

.diagram {
    font: 12px "Noto Sans", sans-serif;
}

.group path {
    stroke: #9a9a9a;
}

.label {
    text-anchor: middle;
}

.claim {
    fill: #80ff80;
    stroke: #59b259;
}

.business {
    fill: #ffffb5;
    stroke: #b2a87f;
}

.party {
    fill: #ff8080;
    stroke: #b25959;
}

.service {
    fill: #0080c0;
    stroke: #005986;
}

.component {
    fill: #b5ffff;
    stroke: #7fb2b2;
}

.lug {
    fill: #a1e4e4;
}

.mark {
    fill: none;
    stroke: #000;
}

.edge {
    fill: #000;
    stroke: #000;
}

.dash {
    fill: none;
    stroke-dasharray: 2 2;
}

.outline {
    fill: none;
    stroke: #000;
}

.handles {
    fill: #000;
    stroke: #fff;
}

/* palette */
.palette {
    flex: none;
    width: 187px;
    border-left: 2px solid #a6a6a6;
    overflow: hidden;
}

.palette-head {
    height: 24px;
    display: flex;
    align-items: center;
    gap: 4px;
    padding: 0 8px 0 2px;
    border-bottom: 1px solid #a6a6a6;
    background: linear-gradient(#fff, #ececec);
}

.palette-head button {
    margin-left: auto;
    display: flex;
}

.palette-head button svg {
    width: 8px;
    height: 12px;
    fill: #fff;
    stroke: #000;
}

.palette-tools {
    height: 22px;
    display: flex;
    align-items: center;
    padding-left: 2px;
    background: #e9e9e9;
    border-bottom: 1px solid #d4d4d4;
}

.tool.on {
    width: 18px;
    height: 20px;
    background: #dedede;
    border: 1px solid #b5b5b5;
}

.items {
    display: grid;
    grid-template-columns: repeat(5, 33px);
    grid-auto-rows: 23px;
    margin: 0 3px;
    padding: 3px 0 5px;
    border-bottom: 1px solid #9a9a9a;
}

.items button {
    display: flex;
    align-items: center;
    padding-left: 3px;
}

.items svg,
.elem {
    width: 16px;
    height: 16px;
    fill: #fff;
    stroke: #000;
}

.grey svg {
    fill: #ececec;
}

.items .tan svg {
    fill: #efbf78;
}

.orange svg {
    fill: #ffdfab;
}

.yellow svg,
.elem {
    fill: #ffffb5;
}

.cyan svg {
    fill: #b5ffff;
}

.green svg {
    fill: #c9e7b7;
}

/* visualiser */
.focus {
    flex: none;
    height: 22px;
    display: flex;
    align-items: center;
    gap: 5px;
    padding-left: 3px;
    white-space: nowrap;
}

.graph {
    font: 13px Inter, "Liberation Sans", sans-serif;
}

.node rect {
    fill: url(#box-blue);
    stroke: #bcc0c6;
}

.node .root {
    fill: url(#box-purple);
}

.node use {
    fill: #ffffb5;
    stroke: #000;
}

.node text {
    fill: #0b4a8c;
}

/* status bar */
.status {
    flex: none;
    height: 27px;
    display: flex;
    align-items: center;
    gap: 5px;
    padding: 0 3px 3px;
}
```
